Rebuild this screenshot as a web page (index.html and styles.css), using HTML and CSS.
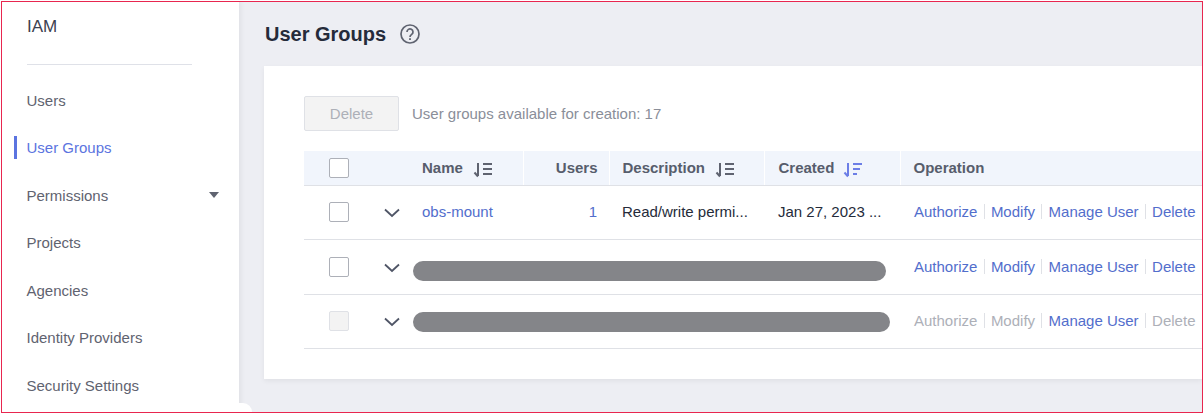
FILE: index.html
```html
<!DOCTYPE html>
<html lang="en">
<head>
  <meta charset="UTF-8">
  <title>User Groups</title>
  <link rel="stylesheet" href="styles.css">
</head>
<body>
  <div class="frame">
    <aside class="sidebar">
      <div class="side-title">IAM</div>
      <nav class="nav">
        <a class="nav-item">Users</a>
        <a class="nav-item active">User Groups</a>
        <a class="nav-item">Permissions<span class="caret"></span></a>
        <a class="nav-item">Projects</a>
        <a class="nav-item">Agencies</a>
        <a class="nav-item">Identity Providers</a>
        <a class="nav-item">Security Settings</a>
      </nav>
      <span class="side-corner"></span>
    </aside>
    <main class="main">
      <header class="page-head">
        <h1>User Groups</h1>
        <svg class="help" width="20" height="20" viewBox="0 0 20 20">
          <circle cx="10" cy="10" r="9" fill="none" stroke="#5f6370" stroke-width="1.7"/>
          <path d="M7 8a3 3 0 1 1 4.700 2.400c-1.100.8-1.700 1.300-1.700 2.600" fill="none" stroke="#5f6370" stroke-width="1.700"/>
          <rect x="9.100" y="14.200" width="1.800" height="1.800" fill="#5f6370"/>
        </svg>
      </header>
      <section class="card">
        <div class="toolbar">
          <button class="btn" disabled>Delete</button>
          <span class="quota">User groups available for creation: 17</span>
        </div>
        <table class="grid">
          <colgroup>
            <col class="c-check"><col class="c-expand"><col class="c-name"><col class="c-users"><col class="c-desc"><col class="c-created"><col>
          </colgroup>
          <thead>
            <tr class="row-head">
              <th class="cell-check"><span class="check"></span></th>
              <th></th>
              <th>Name<svg class="sort" width="20" height="16" viewBox="0 0 20 16"><use href="#sort-plain"/></svg></th>
              <th class="right">Users</th>
              <th>Description<svg class="sort" width="20" height="16" viewBox="0 0 20 16"><use href="#sort-plain"/></svg></th>
              <th class="cell-date">Created<svg class="sort" width="20" height="16" viewBox="0 0 20 16"><path d="M5 1v13M1.500 10.500 5 14.500M10 2h9M10 7h7M10 12h4" fill="none" stroke="#6c7ee6" stroke-width="2"/></svg></th>
              <th class="cell-ops">Operation</th>
            </tr>
          </thead>
          <tbody>
            <tr class="row-a">
              <td class="cell-check"><span class="check"></span></td>
              <td class="cell-expand"><svg class="chev" width="16" height="10" viewBox="0 0 16 10"><use href="#chev"/></svg></td>
              <td><a class="link">obs-mount</a></td>
              <td class="right"><a class="link">1</a></td>
              <td class="dark">Read/write permi...</td>
              <td class="dark cell-date">Jan 27, 2023 ...</td>
              <td class="cell-ops ops"><a class="link">Authorize</a><i></i><a class="link">Modify</a><i></i><a class="link">Manage User</a><i></i><a class="link">Delete</a></td>
            </tr>
            <tr class="row-b">
              <td class="cell-check"><span class="check"></span></td>
              <td class="cell-expand"><svg class="chev" width="16" height="10" viewBox="0 0 16 10"><use href="#chev"/></svg></td>
              <td colspan="4" class="cell-mask"><span class="mask mask-b"></span></td>
              <td class="cell-ops ops"><a class="link">Authorize</a><i></i><a class="link">Modify</a><i></i><a class="link">Manage User</a><i></i><a class="link">Delete</a></td>
            </tr>
            <tr class="row-a">
              <td class="cell-check"><span class="check off"></span></td>
              <td class="cell-expand"><svg class="chev" width="16" height="10" viewBox="0 0 16 10"><use href="#chev"/></svg></td>
              <td colspan="4" class="cell-mask"><span class="mask mask-c"></span></td>
              <td class="cell-ops ops"><a class="off">Authorize</a><i></i><a class="off">Modify</a><i></i><a class="link">Manage User</a><i></i><a class="off">Delete</a></td>
            </tr>
          </tbody>
        </table>
      </section>
    </main>
  </div>
  <svg width="0" height="0" class="defs">
    <symbol id="sort-plain" viewBox="0 0 20 16">
      <path d="M5 1v13M1.500 10.500 5 14.500M10 2h9M10 7h9M10 12h9" fill="none" stroke="#5f6370" stroke-width="2"/>
    </symbol>
    <symbol id="chev" viewBox="0 0 16 10">
      <path d="M1 1.500 8 8l7-6.500" fill="none" stroke="#4f5566" stroke-width="1.800"/>
    </symbol>
  </svg>
</body>
</html>
```

FILE: styles.css
```css
html, body {
  margin: 0;
  height: 100%;
  background: #fff;
  overflow: hidden;
}

body {
  font-family: "Liberation Sans", Arial, sans-serif;
  font-size: 15px;
  padding: 1px;
  box-sizing: border-box;
}

.defs {
  display: none;
}

.frame {
  display: flex;
  height: 412px;
  width: 1202px;
  box-sizing: border-box;
  border: 1px solid #e8264f;
  overflow: hidden;
  background: #edeef3;
}

.sidebar {
  position: relative;
  flex: 0 0 237px;
  background: #fff;
  box-shadow: 2px 0 5px rgba(0, 0, 0, 0.06);
  z-index: 1;
}

.side-title {
  margin: 0 47px 0 25px;
  height: 63px;
  box-sizing: border-box;
  padding-top: 15px;
  font-size: 17px;
  line-height: 20px;
  color: #3c4150;
  border-bottom: 1px solid #dfe1e8;
}

.nav {
  padding-top: 11.700px;
}

.nav-item {
  position: relative;
  display: flex;
  align-items: center;
  justify-content: space-between;
  height: 47.500px;
  padding: 0 20px 0 24.500px;
  color: #5f6370;
}

.nav-item.active {
  color: #5b74e0;
}

.nav-item.active::before {
  content: "";
  position: absolute;
  left: 12px;
  top: 12px;
  width: 3px;
  height: 23px;
  background: #5b74e0;
}

.caret {
  width: 0;
  height: 0;
  border-left: 5px solid transparent;
  border-right: 5px solid transparent;
  border-top: 6px solid #5f6370;
}

.side-corner {
  position: absolute;
  right: -13px;
  bottom: 0;
  width: 13px;
  height: 9px;
  background: #fff;
  border-top-right-radius: 10px;
}

.main {
  flex: 1;
  min-width: 0;
  padding: 0 0 0 25px;
}

.page-head {
  display: flex;
  align-items: center;
  height: 64px;
}

.page-head h1 {
  margin: 0 0 0 1px;
  font-size: 20px;
  line-height: 24px;
  font-weight: 700;
  color: #252b3a;
}

.help {
  margin-left: 14px;
}

.card {
  height: 313px;
  box-sizing: border-box;
  background: #fff;
  padding: 30px 0 0 40px;
  box-shadow: 0 2px 5px rgba(0, 0, 0, 0.06);
}

.toolbar {
  display: flex;
  align-items: center;
  height: 35px;
  margin-bottom: 20px;
}

.btn {
  width: 95px;
  height: 35px;
  background: #f3f3f3;
  border: 1px solid #dfe1e6;
  border-radius: 2px;
  color: #adb0b8;
  font: inherit;
  padding: 0;
}

.quota {
  margin-left: 13px;
  color: #8a8e99;
}

.grid {
  width: 898px;
  table-layout: fixed;
  border-collapse: collapse;
}

.c-check { width: 70px; }
.c-expand { width: 35px; }
.c-name { width: 114px; }
.c-users { width: 86px; }
.c-desc { width: 155px; }
.c-created { width: 136px; }

.row-head { height: 34px; }
.row-a { height: 54px; }
.row-b { height: 55px; }

.grid th {
  padding: 0 11px 1px 13px;
  text-align: left;
  font-weight: 700;
  color: #575d6c;
  background: #f1f5fc;
  border-bottom: 1px solid #dfe1e6;
  border-left: 1px solid #fff;
  white-space: nowrap;
}

.grid th:first-child,
.grid th:nth-child(2),
.grid th:nth-child(3) {
  border-left: 0;
}

.grid td {
  padding: 0 12px 1px 13px;
  border-bottom: 1px solid #dfe1e6;
  white-space: nowrap;
}

.grid .right {
  text-align: right;
}

.grid th.cell-check {
  padding: 0 0 0 25px;
}

.grid td.cell-check {
  padding: 0 0 1px 25px;
}

.row-b td.cell-check {
  padding-bottom: 0;
}

.grid td.cell-mask {
  padding: 2px 0 0 4px;
}

.row-b td.cell-mask {
  padding-top: 9px;
}

.grid td.cell-expand {
  padding: 2px 0 0 10px;
}

.grid .cell-date {
  padding-left: 14px;
}

.cell-date .sort {
  margin-left: 9px;
}

.grid th.cell-ops {
  padding-left: 13px;
}

.grid td.cell-ops {
  padding-left: 14px;
}

.check {
  display: block;
  width: 20px;
  height: 20px;
  box-sizing: border-box;
  background: #fff;
  border: 1px solid #adb0b8;
  border-radius: 2px;
}

.check.off {
  background: #f3f3f3;
  border-color: #dfe1e6;
}

.chev {
  display: block;
}

.sort {
  margin: -4px 0 -4px 10px;
  vertical-align: -1px;
}

.mask {
  display: block;
  height: 20px;
  border-radius: 10px;
  background: #848589;
}

.mask-b { width: 473px; }
.mask-c { width: 477px; }

.link {
  color: #526ecc;
}

.off {
  color: #adb0b8;
}

.dark {
  color: #252b3a;
}

.ops i {
  display: inline-block;
  width: 1px;
  height: 15px;
  margin: 0 6.250px;
  vertical-align: -2px;
  background: #dfe1e6;
}
```
